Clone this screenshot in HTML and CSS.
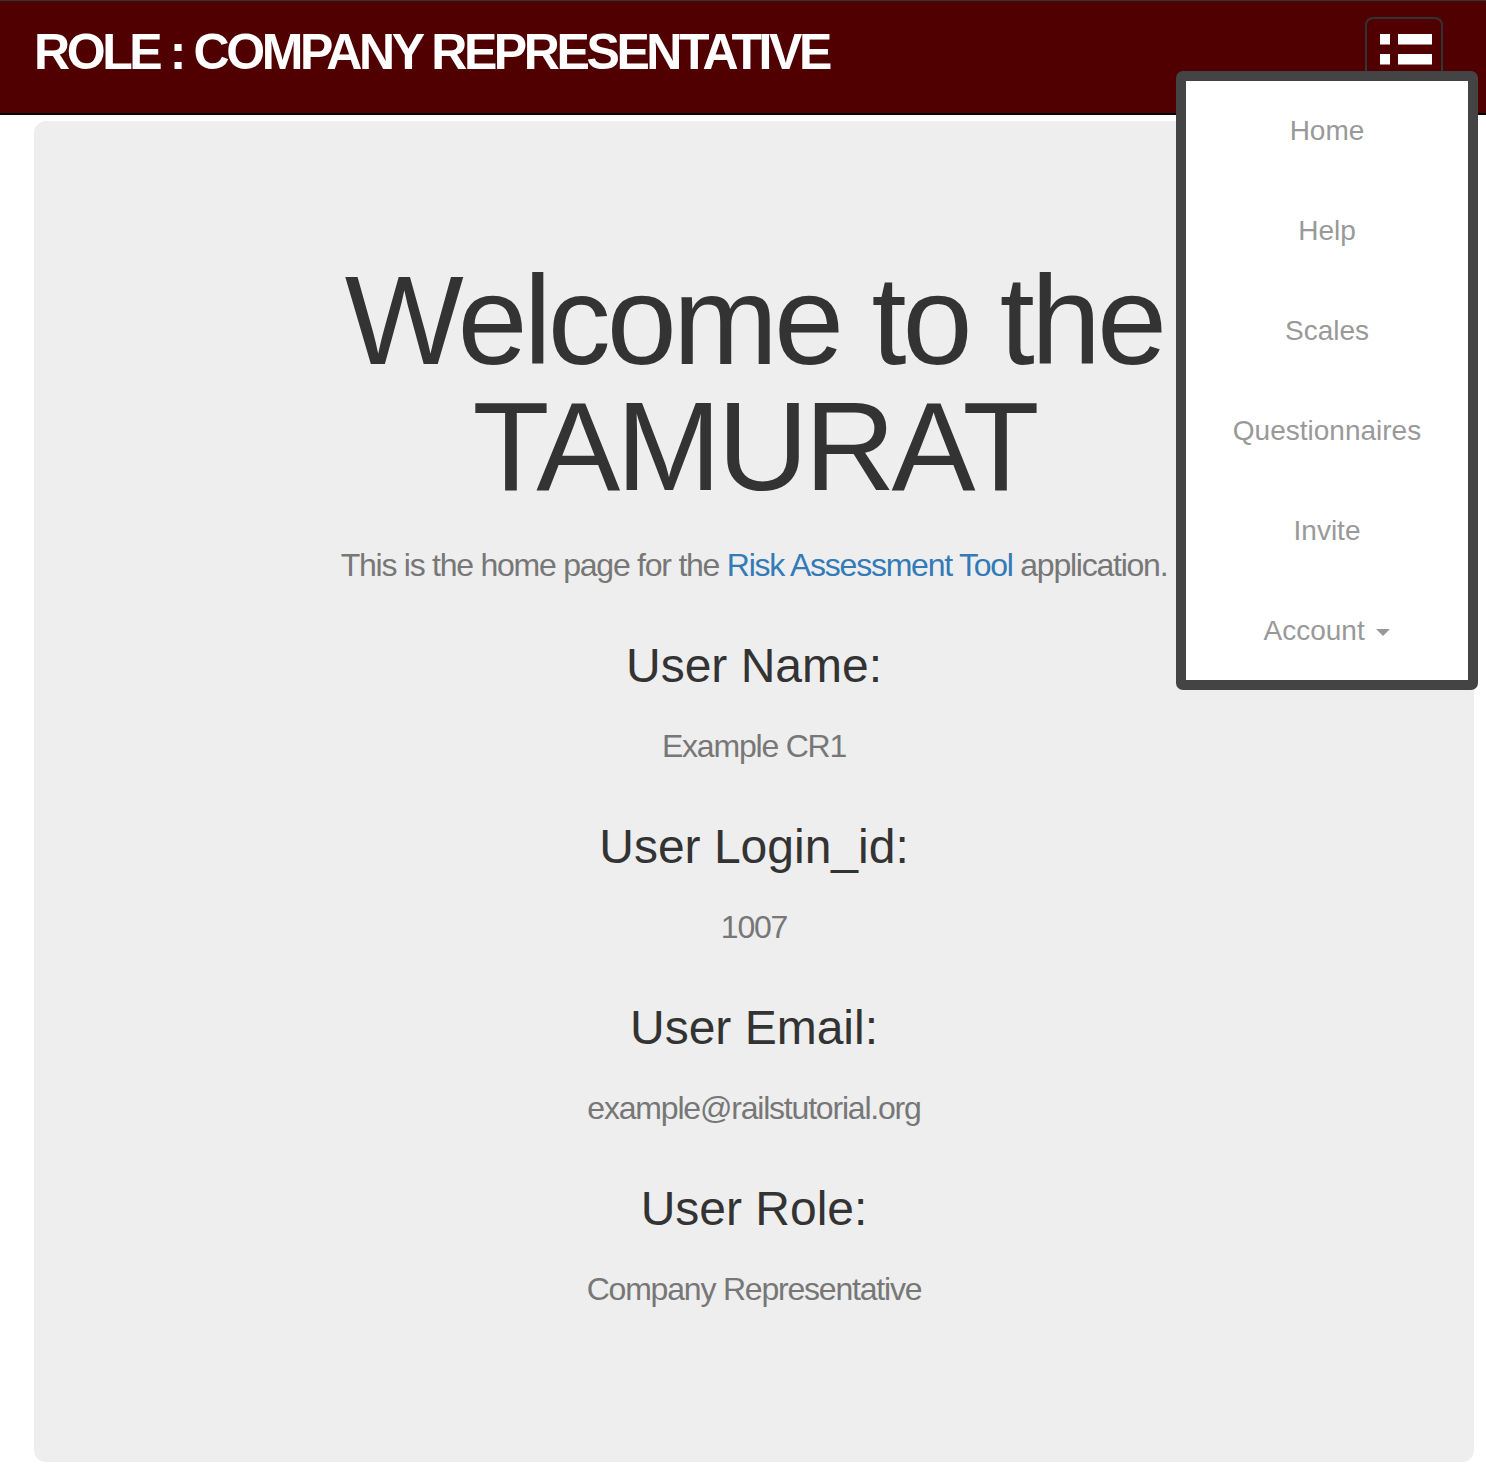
FILE: index.html
```html
<!DOCTYPE html>
<html lang="en">
<head>
<meta charset="utf-8">
<title>TAMURAT</title>
<link rel="stylesheet" href="styles.css">
</head>
<body>
<header class="navbar">
  <div class="brand">ROLE : COMPANY REPRESENTATIVE</div>
  <button class="toggle" type="button" aria-label="Toggle navigation">
    <svg class="toggle-icon" width="52" height="31" viewBox="0 0 52 31">
      <rect x="0" y="0" width="10" height="10.5" fill="#fff"/>
      <rect x="18" y="0" width="34" height="10.5" fill="#fff"/>
      <rect x="0" y="20" width="10" height="10.5" fill="#fff"/>
      <rect x="18" y="20" width="34" height="10.5" fill="#fff"/>
    </svg>
  </button>
  <nav class="menu">
    <ul class="menu-list">
      <li><a href="#">Home</a></li>
      <li><a href="#">Help</a></li>
      <li><a href="#">Scales</a></li>
      <li><a href="#">Questionnaires</a></li>
      <li><a href="#">Invite</a></li>
      <li><a href="#">Account <span class="caret"></span></a></li>
    </ul>
  </nav>
</header>
<main class="jumbotron">
  <h1 class="title">Welcome to the TAMURAT</h1>
  <p class="lead">This is the home page for the <a href="#">Risk Assessment Tool</a> application.</p>
  <h3 class="field-label">User Name:</h3>
  <p class="field-value">Example CR1</p>
  <h3 class="field-label">User Login_id:</h3>
  <p class="field-value">1007</p>
  <h3 class="field-label">User Email:</h3>
  <p class="field-value">example@railstutorial.org</p>
  <h3 class="field-label">User Role:</h3>
  <p class="field-value">Company Representative</p>
</main>
</body>
</html>
```

FILE: styles.css
```css
html, body {
  margin: 0;
  padding: 0;
  background: #fff;
}

body {
  font-family: "Liberation Sans", Arial, sans-serif;
  color: #333;
}

.navbar {
  position: relative;
  height: 112px;
  background: #500000;
  border-top: 1px solid #333;
  border-bottom: 2px solid #000;
  display: flex;
  justify-content: space-between;
  align-items: flex-start;
  padding: 0 43px 0 34px;
}

.brand {
  margin-top: 23px;
  font-size: 50px;
  line-height: 1.15;
  font-weight: bold;
  color: #fff;
  letter-spacing: -3.4px;
  white-space: nowrap;
}

.toggle {
  margin: 16px 0 0;
  width: 78px;
  padding: 15px 0 18px 13px;
  box-sizing: border-box;
  background: transparent;
  border: 2px solid #333;
  border-radius: 8px;
  display: flex;
  align-items: flex-start;
  justify-content: flex-start;
}

.toggle-icon {
  display: block;
}

.menu {
  position: absolute;
  top: 70px;
  right: 8px;
  width: 302px;
  box-sizing: border-box;
  background: #fff;
  border: 10px solid #444;
  border-radius: 7px;
  z-index: 10;
}

.menu-list {
  list-style: none;
  margin: 0;
  padding: 0;
}

.menu-list li {
  height: 100px;
  line-height: 100px;
  text-align: center;
}

.menu-list li:last-child {
  height: 99px;
}

.menu-list a {
  font-size: 28px;
  color: #999;
  text-decoration: none;
}

.caret {
  display: inline-block;
  width: 0;
  height: 0;
  margin-left: 4px;
  vertical-align: middle;
  border-top: 7px solid #999;
  border-left: 7px solid transparent;
  border-right: 7px solid transparent;
}

.jumbotron {
  margin: 6px 12px 0 34px;
  padding: 137px 60px 143px;
  background: #eee;
  border-radius: 12px;
  text-align: center;
}

.title {
  margin: 0;
  font-size: 126px;
  line-height: 126px;
  font-weight: normal;
  color: #333;
  letter-spacing: -3.9px;
}

.lead {
  margin: 25px 0 0;
  font-size: 32px;
  line-height: 60px;
  color: #777;
  letter-spacing: -1.24px;
}

.lead a {
  color: #337ab7;
  text-decoration: none;
}

.field-label {
  margin: 41px 0 20px;
  font-size: 48px;
  line-height: 60px;
  font-weight: normal;
  color: #333;
  letter-spacing: 0;
}

.field-value {
  margin: 0;
  font-size: 32px;
  line-height: 60px;
  color: #777;
  letter-spacing: -1.2px;
}
```
